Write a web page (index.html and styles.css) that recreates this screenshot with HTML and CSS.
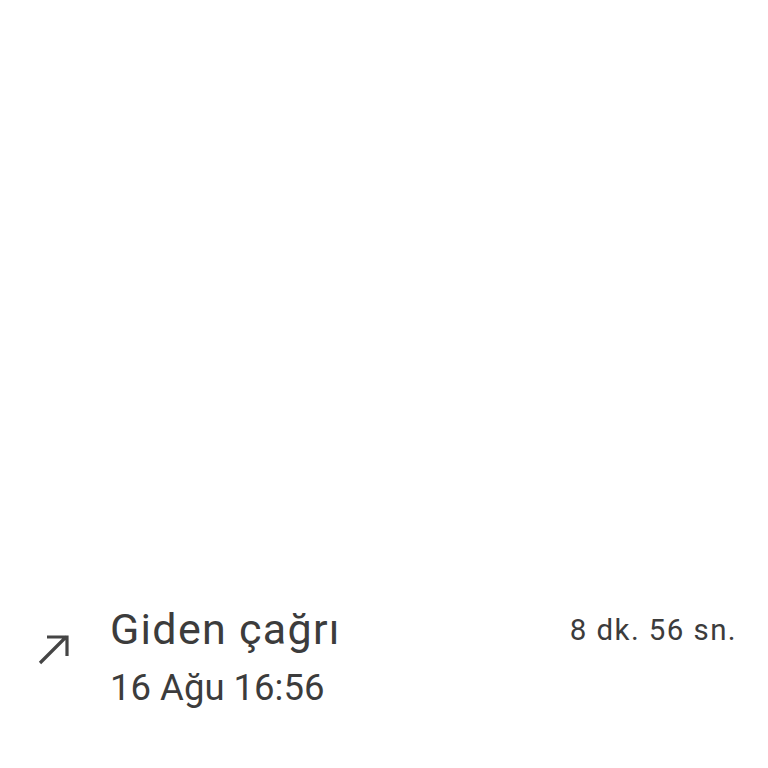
FILE: index.html
```html
<!DOCTYPE html>
<html lang="tr">
<head>
<meta charset="utf-8">
<link rel="stylesheet" href="styles.css">
</head>
<body>
<div class="screen">
  <div class="call-row">
    <div class="icon">
      <svg width="32" height="32" viewBox="0 0 32 32">
        <path d="M3 29 L29.5 2.5 M10 3 H30 V22" fill="none" stroke="#454545" stroke-width="3.2"/>
      </svg>
    </div>
    <div class="texts">
      <div class="title">Giden çağrı</div>
      <div class="sub">16 Ağu 16:56</div>
    </div>
    <div class="duration">8 dk. 56 sn.</div>
  </div>
</div>
</body>
</html>
```

FILE: styles.css
```css
html, body {
  margin: 0;
  padding: 0;
  background: #ffffff;
}
.screen {
  width: 768px;
  height: 768px;
  display: flex;
  flex-direction: column;
  justify-content: flex-end;
  font-family: Roboto, "Noto Sans", sans-serif;
  color: #3c3c3c;
}
.call-row {
  display: flex;
  align-items: flex-start;
  padding: 0 32px 54px 37px;
}
.icon {
  width: 73px;
  padding-top: 30px;
}
.texts {
  flex: 1;
}
.title {
  font-size: 43px;
  line-height: 56px;
  letter-spacing: 1.3px;
  margin-top: -3px;
}
.sub {
  font-size: 36.5px;
  line-height: 52px;
  margin-top: 5px;
}
.duration {
  font-size: 29.5px;
  line-height: 56px;
  letter-spacing: 1.4px;
  margin-right: -1px;
  margin-top: -2px;
}
```
